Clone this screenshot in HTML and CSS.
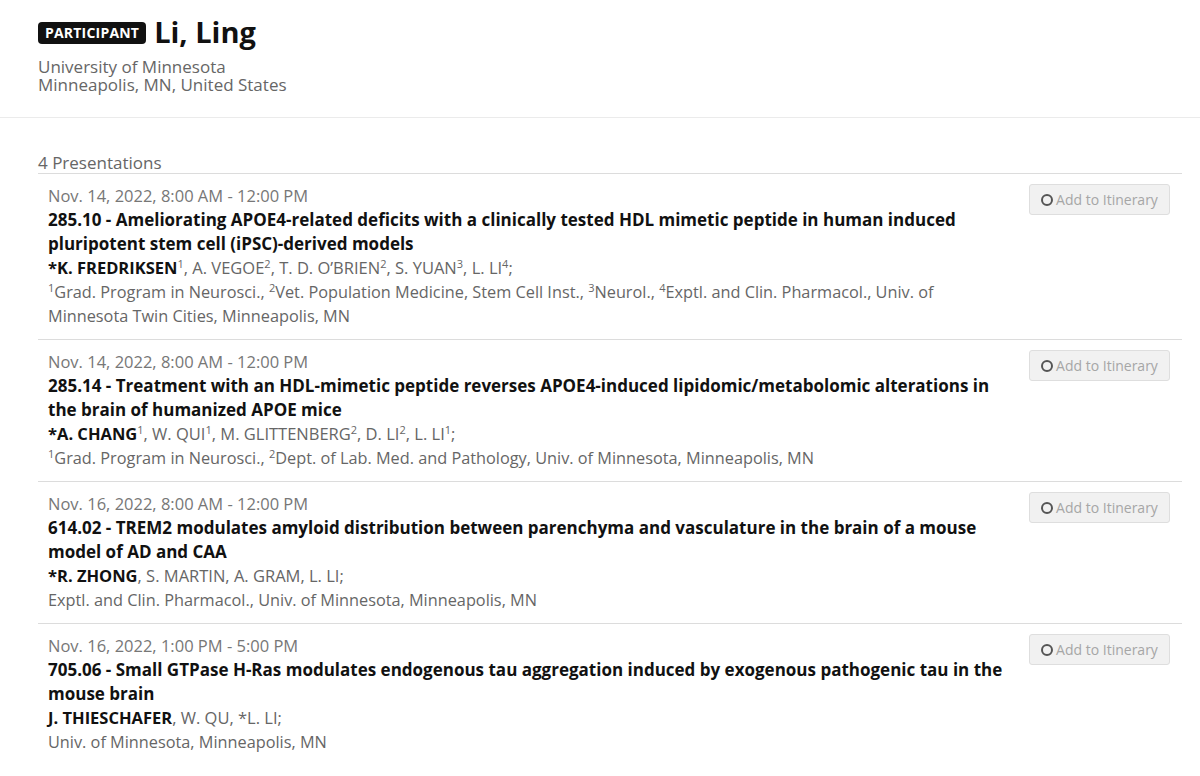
FILE: index.html
```html
<!DOCTYPE html>
<html>
<head>
<meta charset="utf-8">
<link rel="stylesheet" href="styles.css">
</head>
<body>
<header class="header">
  <div class="title-row">
    <span class="badge">PARTICIPANT</span>
    <h1 class="name">Li, Ling</h1>
  </div>
  <div class="inst">University of Minnesota<br>Minneapolis, MN, United States</div>
</header>
<main class="main">
  <div class="count">4 Presentations</div>

  <div class="item">
    <div class="content">
      <div class="date">Nov. 14, 2022, 8:00 AM - 12:00 PM</div>
      <div class="ptitle">285.10 - Ameliorating APOE4-related deficits with a clinically tested HDL mimetic peptide in human induced pluripotent stem cell (iPSC)-derived models</div>
      <div class="authors"><b>*K. FREDRIKSEN</b><sup>1</sup>, A. VEGOE<sup>2</sup>, T. D. O’BRIEN<sup>2</sup>, S. YUAN<sup>3</sup>, L. LI<sup>4</sup>;</div>
      <div class="affil"><sup>1</sup>Grad. Program in Neurosci., <sup>2</sup>Vet. Population Medicine, Stem Cell Inst., <sup>3</sup>Neurol., <sup>4</sup>Exptl. and Clin. Pharmacol., Univ. of Minnesota Twin Cities, Minneapolis, MN</div>
    </div>
    <button class="btn"><span class="ring"></span>Add to Itinerary</button>
  </div>

  <div class="item">
    <div class="content">
      <div class="date">Nov. 14, 2022, 8:00 AM - 12:00 PM</div>
      <div class="ptitle">285.14 - Treatment with an HDL-mimetic peptide reverses APOE4-induced lipidomic/metabolomic alterations in the brain of humanized APOE mice</div>
      <div class="authors"><b>*A. CHANG</b><sup>1</sup>, W. QUI<sup>1</sup>, M. GLITTENBERG<sup>2</sup>, D. LI<sup>2</sup>, L. LI<sup>1</sup>;</div>
      <div class="affil"><sup>1</sup>Grad. Program in Neurosci., <sup>2</sup>Dept. of Lab. Med. and Pathology, Univ. of Minnesota, Minneapolis, MN</div>
    </div>
    <button class="btn"><span class="ring"></span>Add to Itinerary</button>
  </div>

  <div class="item">
    <div class="content">
      <div class="date">Nov. 16, 2022, 8:00 AM - 12:00 PM</div>
      <div class="ptitle">614.02 - TREM2 modulates amyloid distribution between parenchyma and vasculature in the brain of a mouse model of AD and CAA</div>
      <div class="authors"><b>*R. ZHONG</b>, S. MARTIN, A. GRAM, L. LI;</div>
      <div class="affil">Exptl. and Clin. Pharmacol., Univ. of Minnesota, Minneapolis, MN</div>
    </div>
    <button class="btn"><span class="ring"></span>Add to Itinerary</button>
  </div>

  <div class="item last">
    <div class="content">
      <div class="date">Nov. 16, 2022, 1:00 PM - 5:00 PM</div>
      <div class="ptitle">705.06 - Small GTPase H-Ras modulates endogenous tau aggregation induced by exogenous pathogenic tau in the mouse brain</div>
      <div class="authors"><b>J. THIESCHAFER</b>, W. QU, *L. LI;</div>
      <div class="affil">Univ. of Minnesota, Minneapolis, MN</div>
    </div>
    <button class="btn"><span class="ring"></span>Add to Itinerary</button>
  </div>
</main>
</body>
</html>
```

FILE: styles.css
```css
* { box-sizing: border-box; }
body {
  margin: 0;
  font-family: "Open Sans", "DejaVu Sans", sans-serif;
  color: #222;
  background: #fff;
}
.header {
  padding: 14px 38px 23px;
  border-bottom: 1px solid #ebebeb;
}
.title-row {
  display: flex;
  align-items: center;
  gap: 8px;
  height: 36px;
}
.badge {
  background: #111;
  color: #fff;
  font-weight: 700;
  font-size: 14px;
  line-height: 22px;
  padding: 0 7px;
  border-radius: 4px;
  letter-spacing: 0.2px;
  margin-top: 2px;
}
.name {
  margin: 0;
  font-size: 29px;
  font-weight: 700;
  line-height: 36px;
  color: #111;
}
.inst {
  margin-top: 8px;
  font-size: 17px;
  line-height: 18px;
  color: #666;
}
.main {
  padding: 0 18px 0 38px;
}
.count {
  margin-top: 35px;
  font-size: 17px;
  line-height: 20px;
  color: #666;
  border-bottom: 1px solid #dcdcdc;
}
.item {
  display: flex;
  align-items: flex-start;
  padding: 10px 12px 11px 10px;
  border-bottom: 1px solid #dcdcdc;
}
.item.last { border-bottom: none; }
.content {
  width: 962px;
  font-size: 16.5px;
  line-height: 24px;
}
.date { color: #777; }
.ptitle { font-weight: 700; color: #111; font-size: 17px; }
.authors { color: #666; }
.authors b { color: #111; font-weight: 700; }
.affil { color: #666; font-size: 16.3px; }
sup {
  font-size: 11px;
  line-height: 0;
  vertical-align: 6px;
}
.btn {
  margin-left: auto;
  display: flex;
  align-items: center;
  justify-content: center;
  gap: 3px;
  width: 141px;
  height: 31px;
  padding: 0;
  background: #f1f1f1;
  border: 1px solid #dedede;
  border-radius: 3px;
  font-family: "Open Sans", "DejaVu Sans", sans-serif;
  font-size: 14px;
  color: #a6a6a6;
}
.ring {
  width: 12px;
  height: 12px;
  border: 2px solid #555;
  border-radius: 50%;
}
```
